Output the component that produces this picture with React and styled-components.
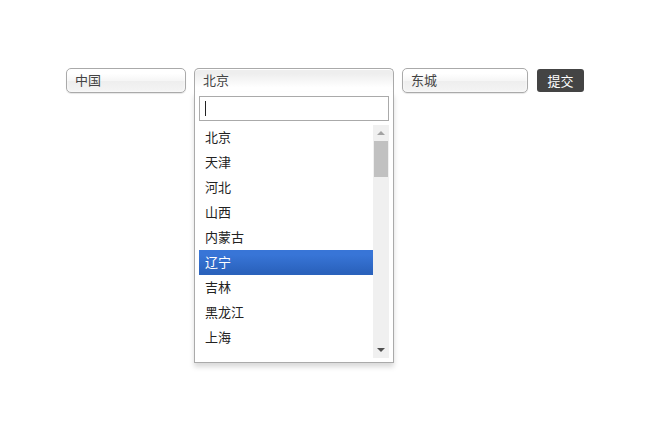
import React from "react";
import styled, { createGlobalStyle } from "styled-components";

const GlobalStyle = createGlobalStyle`
  html, body {
    margin: 0;
    padding: 0;
    background: #fff;
  }
  body {
    font-family: "Noto Sans CJK SC", "Liberation Sans", sans-serif;
    font-size: 13px;
    color: #444;
  }
`;

const Page = styled.div`
  display: flex;
  justify-content: center;
  align-items: flex-start;
  padding-top: 68px;
  width: 650px;
  height: 436px;
  box-sizing: border-box;
`;

const Form = styled.form`
  display: flex;
  align-items: flex-start;
  margin: 0;
`;

const Chosen = styled.div`
  position: relative;
  width: ${(p) => p.$width}px;
  margin-right: ${(p) => p.$gap}px;
  flex-shrink: 0;
`;

const Single = styled.a`
  display: block;
  height: 23px;
  line-height: 22px;
  padding-left: 8px;
  border: 1px solid #aaa;
  border-bottom: ${(p) => (p.$open ? "0" : "1px solid #aaa")};
  border-radius: ${(p) => (p.$open ? "5px 5px 0 0" : "5px")};
  background: ${(p) =>
    p.$open
      ? "linear-gradient(to bottom, #eee 20%, #fff 80%)"
      : "linear-gradient(to bottom, #fff 20%, #f6f6f6 50%, #eee 52%, #f4f4f4 100%)"};
  box-shadow: ${(p) =>
    p.$open
      ? "0 1px 0 #fff inset"
      : "0 0 3px #fff inset, 0 1px 1px rgba(0, 0, 0, 0.1)"};
  color: #444;
  text-decoration: none;
  white-space: nowrap;
  overflow: hidden;
  cursor: pointer;
`;

const Drop = styled.div`
  position: absolute;
  top: 24px;
  left: 0;
  right: 0;
  background: #fff;
  border: 1px solid #aaa;
  border-top: 0;
  box-shadow: 0 4px 5px rgba(0, 0, 0, 0.15);
  z-index: 10;
`;

const Search = styled.div`
  padding: 3px 4px 3px;
`;

const SearchBox = styled.div`
  display: flex;
  align-items: center;
  height: 23px;
  margin: 1px 0;
  padding: 0 5px;
  border: 1px solid #aaa;
  background: #fff;
`;

const Caret = styled.span`
  width: 1px;
  height: 15px;
  background: #222;
`;

const Results = styled.div`
  display: flex;
  height: 233px;
  margin: 0 4px 4px 0;
  padding-left: 4px;
  overflow: hidden;
`;

const List = styled.ul`
  flex: 1;
  margin: 0;
  padding: 0;
  list-style: none;
`;

const Item = styled.li`
  line-height: 15px;
  padding: 4px 6px 6px;
  color: ${(p) => (p.$active ? "#fff" : "#222")};
  background: ${(p) =>
    p.$active ? "linear-gradient(to bottom, #3875d7 20%, #2a62bc 90%)" : "transparent"};
`;

const ScrollBar = styled.div`
  display: flex;
  flex-direction: column;
  width: 16px;
  background: #f0f0f0;
`;

const ScrollButton = styled.div`
  display: flex;
  align-items: center;
  justify-content: center;
  height: 16px;

  &::after {
    content: "";
    width: 0;
    height: 0;
    border-left: 4px solid transparent;
    border-right: 4px solid transparent;
    ${(p) =>
      p.$down
        ? "border-top: 4px solid #505050;"
        : "border-bottom: 4px solid #a3a3a3;"}
  }
`;

const Thumb = styled.div`
  height: 36px;
  margin: 0 1px;
  background: #c1c1c1;
`;

const Track = styled.div`
  flex: 1;
`;

const Submit = styled.button`
  width: 47px;
  height: 23px;
  margin-top: 1px;
  padding: 0;
  border: 0;
  border-radius: 3px;
  background: #444;
  color: #fff;
  font-family: inherit;
  font-size: 13px;
  line-height: 22px;
  cursor: pointer;
`;

const provinces = ["北京", "天津", "河北", "山西", "内蒙古", "辽宁", "吉林", "黑龙江", "上海"];

export default function App() {
  return (
    <>
      <GlobalStyle />
      <Page>
        <Form onSubmit={(e) => e.preventDefault()}>
          <Chosen $width={120} $gap={8}>
            <Single>中国</Single>
          </Chosen>
          <Chosen $width={200} $gap={8}>
            <Single $open>北京</Single>
            <Drop>
              <Search>
                <SearchBox>
                  <Caret />
                </SearchBox>
              </Search>
              <Results>
                <List>
                  {provinces.map((name) => (
                    <Item key={name} $active={name === "辽宁"}>
                      {name}
                    </Item>
                  ))}
                </List>
                <ScrollBar>
                  <ScrollButton />
                  <Thumb />
                  <Track />
                  <ScrollButton $down />
                </ScrollBar>
              </Results>
            </Drop>
          </Chosen>
          <Chosen $width={126} $gap={9}>
            <Single>东城</Single>
          </Chosen>
          <Submit type="submit">提交</Submit>
        </Form>
      </Page>
    </>
  );
}
